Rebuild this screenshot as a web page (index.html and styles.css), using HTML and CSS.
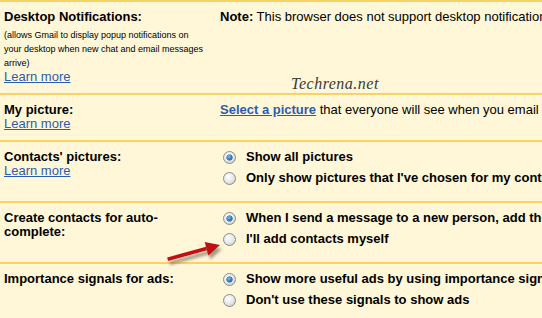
FILE: index.html
```html
<!DOCTYPE html>
<html>
<head>
    <title>Settings</title>
    <link rel="stylesheet" href="styles.css">
</head>
<body>
    <div class="settings">
        <div class="row">
            <div class="label">
                <div class="title">Desktop Notifications:</div>
                <div class="hint">(allows Gmail to display popup notifications on your desktop when new chat and email messages arrive)</div>
                <a href="#" class="learn">Learn more</a>
            </div>
            <div class="value"><b>Note:</b> This browser does not support desktop notifications</div>
        </div>

        <div class="row">
            <div class="label">
                <div class="title">My picture:</div>
                <a href="#" class="learn">Learn more</a>
            </div>
            <div class="value"><a href="#" class="strong-link">Select a picture</a> that everyone will see when you email them</div>
        </div>

        <div class="row">
            <div class="label">
                <div class="title">Contacts' pictures:</div>
                <a href="#" class="learn">Learn more</a>
            </div>
            <div class="value">
                <label class="option"><span class="radio on"></span>Show all pictures</label>
                <label class="option"><span class="radio"></span>Only show pictures that I've chosen for my contacts</label>
            </div>
        </div>

        <div class="row">
            <div class="label">
                <div class="title">Create contacts for auto-complete:</div>
            </div>
            <div class="value">
                <label class="option"><span class="radio on"></span>When I send a message to a new person, add them to Other Contacts</label>
                <label class="option"><span class="radio"></span>I'll add contacts myself</label>
            </div>
        </div>

        <div class="row">
            <div class="label">
                <div class="title">Importance signals for ads:</div>
            </div>
            <div class="value">
                <label class="option"><span class="radio on"></span>Show more useful ads by using importance signals</label>
                <label class="option"><span class="radio"></span>Don't use these signals to show ads</label>
            </div>
        </div>
    </div>

    <!-- watermark and annotation arrow drawn over the screenshot -->
    <div class="watermark">Techrena.net</div>
    <svg class="arrow" width="70" height="36" viewBox="0 0 70 36">
        <defs>
            <filter id="soft" x="-20%" y="-40%" width="140%" height="180%">
                <feGaussianBlur stdDeviation="1.5"/>
            </filter>
        </defs>
        <g fill="#7a7060" filter="url(#soft)" opacity="0.7" transform="translate(2,4)">
            <path d="M8 26 L46.9 15.3 L46.1 11.8 L7.2 22.4 Z"/>
            <path d="M60 10 L48.3 20.4 L44.7 6.9 Z"/>
        </g>
        <g fill="#c01010">
            <path d="M8 26 L46.9 15.3 L46.1 11.8 L7.2 22.4 Z"/>
            <path d="M60 10 L48.3 20.4 L44.7 6.9 Z"/>
        </g>
    </svg>
</body>
</html>
```

FILE: styles.css
```css
body {
    margin: 0;
    background-color: #fff7d7;
    font-family: "Liberation Sans", Arial, sans-serif;
    font-size: 13px;
    color: #000;
    overflow: hidden;
    position: relative;
}

.row {
    display: grid;
    grid-template-columns: 216px auto;
    border-top: 2px solid #f8d264;
    padding: 8px 0 9px;
    line-height: 14px;
}

.label {
    padding: 0 12px 0 4px;
}

.title {
    font-weight: bold;
}

.hint {
    font-size: 9px;
    line-height: 14px;
    margin-top: 4px;
}

.learn {
    display: block;
    color: #2a5db0;
    text-decoration: underline;
}

.value {
    padding-left: 4px;
    white-space: nowrap;
}

.strong-link {
    color: #2a5db0;
    font-weight: bold;
    text-decoration: underline;
}

.option {
    display: flex;
    align-items: flex-start;
    height: 21px;
    font-weight: bold;
}

.radio {
    width: 13px;
    height: 13px;
    box-sizing: border-box;
    border-radius: 50%;
    border: 1px solid #8c8c8c;
    background: radial-gradient(circle at 40% 35%, #ffffff 0%, #e6e6e6 55%, #bdbdbd 100%);
    margin: 1px 10px 0 3px;
    position: relative;
    flex-shrink: 0;
}

.radio.on::after {
    content: "";
    position: absolute;
    top: 3px;
    left: 3px;
    width: 5px;
    height: 5px;
    border-radius: 50%;
    background: radial-gradient(circle at 40% 35%, #7cc6f2 0%, #1776bd 60%, #0b3f70 100%);
    box-shadow: 0 0 0 0.5px #0b3f70;
}

.watermark {
    position: absolute;
    left: 291px;
    top: 75px;
    font-family: "Liberation Serif", serif;
    font-style: italic;
    font-size: 16px;
    letter-spacing: 0.5px;
    color: #3a3a3a;
}

.arrow {
    position: absolute;
    left: 160px;
    top: 235px;
}
```
